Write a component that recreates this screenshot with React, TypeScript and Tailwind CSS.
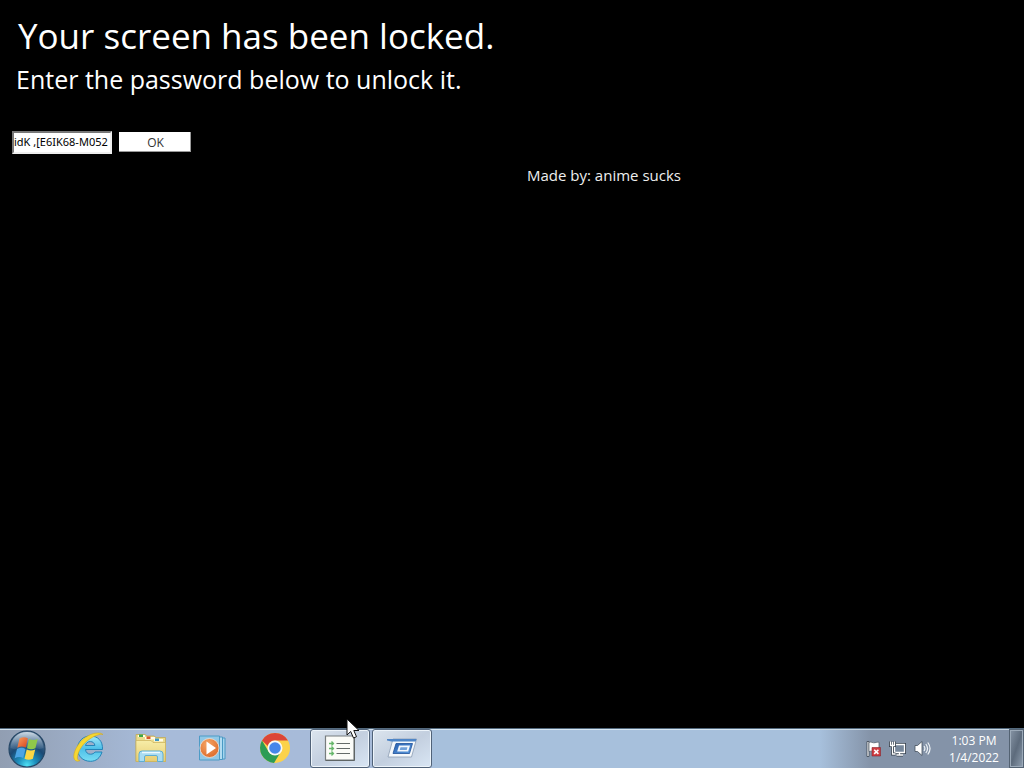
import { useState } from "react";
import type { ReactNode } from "react";

function StartOrb() {
  return (
    <svg viewBox="0 0 38 38" className="h-[38px] w-[38px]" aria-hidden="true">
      <defs>
        <radialGradient id="orb" cx="50%" cy="95%" r="90%">
          <stop offset="0" stopColor="#4fe0f4" />
          <stop offset="0.28" stopColor="#1d8fbd" />
          <stop offset="0.6" stopColor="#1b4a75" />
          <stop offset="1" stopColor="#54718f" />
        </radialGradient>
        <linearGradient id="orbShine" x1="0" y1="0" x2="0" y2="1">
          <stop offset="0" stopColor="#e3edf5" stopOpacity="0.85" />
          <stop offset="1" stopColor="#8fa9c2" stopOpacity="0.15" />
        </linearGradient>
        <linearGradient id="flagRed" x1="0" y1="0" x2="1" y2="1">
          <stop offset="0" stopColor="#f7a060" />
          <stop offset="1" stopColor="#d9431c" />
        </linearGradient>
      </defs>
      <circle cx="19" cy="19" r="18" fill="url(#orb)" stroke="#264766" strokeWidth="1.2" />
      <path d="M2.500 18C3 8 10 2 19 2s16 6 16.500 16C29 21 25 16 19 17S8 21 2.500 18z" fill="url(#orbShine)" />
      <path d="M11.500 8.500c3-1.800 5.800-1.700 8.300-.2L17.800 17.500c-2.700-1.400-5.500-1.300-8.500.2z" fill="url(#flagRed)" />
      <path d="M21 9c2.800 1.400 5.800 1.400 8.700 0l-2.300 9.300c-2.800 1.400-5.600 1.300-8.400 0z" fill="#8fc84a" />
      <path d="M9 19c3-1.500 5.800-1.500 8.500-.1l-2.300 9.200c-2.700-1.500-5.500-1.500-8.500.2z" fill="#4ba4e4" />
      <path d="M18.700 19.500c2.800 1.300 5.600 1.300 8.500 0l-2.300 9.200c-2.900 1.500-5.700 1.400-8.400 0z" fill="#fbd644" />
    </svg>
  );
}

function ExplorerE() {
  return (
    <svg viewBox="0 0 32 32" className="h-8 w-8" aria-hidden="true">
      <defs>
        <linearGradient id="ie" x1="0" y1="0" x2="0" y2="1">
          <stop offset="0" stopColor="#a2e8f8" />
          <stop offset="0.5" stopColor="#4cbfe9" />
          <stop offset="1" stopColor="#7addf4" />
        </linearGradient>
      </defs>
      <path
        d="M29.500 17.500H12.500c.3 3 2.300 4.700 5 4.700 2 0 3.500-.8 4.500-2.200h7c-1.800 6-6 9.300-11.500 9.300C9.700 29.300 4.500 24 4.500 16.800S10 4 17.200 4c7.800 0 12.700 5 12.300 13.500zM12.500 13.500h9.400c-.4-2.500-2.100-3.900-4.600-3.900s-4.300 1.400-4.800 3.900z"
        fill="url(#ie)"
        stroke="#2584b8"
        strokeWidth="1"
      />
      <path
        d="M30 2.500C25-1.500 13 2.500 6.500 11 1 18.200-1 26 2.500 28.500c1.500 1 3 .8 4.500 0-2.600.2-3.200-2.500-2-6.200 1.300-4.900 5.500-11.200 11-14.800C21 4 27 1.500 30 2.500z"
        fill="#f6d730"
        stroke="#d3a91e"
        strokeWidth="0.600"
      />
    </svg>
  );
}

function Folders() {
  return (
    <svg viewBox="0 0 34 32" className="h-8 w-[34px]" aria-hidden="true">
      <defs>
        <linearGradient id="folder" x1="0" y1="0" x2="0" y2="1">
          <stop offset="0" stopColor="#f7eda8" />
          <stop offset="1" stopColor="#e7cd72" />
        </linearGradient>
      </defs>
      <path d="M2 5V2.500h9L13 4h7l2 1.500h9.500v24H2z" fill="#eadb8c" stroke="#bfa54e" strokeWidth="0.700" />
      <path d="M4 3h7v2H4z" fill="#fffde9" />
      <path d="M5 2.500h4v2.500H5z" fill="#3ca648" />
      <path d="M11 5h10v2.500h-10z" fill="#fffbe7" />
      <path d="M12.500 4.500h4v2.500h-4z" fill="#d8562f" />
      <path d="M20 7h9v2.500h-9z" fill="#fffbe7" />
      <path d="M21 6.500h4v2.500h-4z" fill="#3e98c6" />
      <path d="M2 8.500h15l2 2h12.500v19H2z" fill="url(#folder)" stroke="#cbb15b" strokeWidth="0.700" />
      <path
        d="M5 29.500V22q0-3 3-3h18q3 0 3 3v7.500h-5.500V25q0-1.500-1.500-1.500H12q-1.500 0-1.500 1.500v4.500z"
        fill="#a9dcf2"
        stroke="#5faed3"
        strokeWidth="1"
      />
      <path d="M8 20.500h18" stroke="#ecfaff" strokeWidth="1.500" />
    </svg>
  );
}

function MediaPlayer() {
  return (
    <svg viewBox="0 0 32 28" className="h-7 w-8" aria-hidden="true">
      <defs>
        <radialGradient id="play" cx="40%" cy="30%" r="75%">
          <stop offset="0" stopColor="#f5a565" />
          <stop offset="1" stopColor="#dc6a2a" />
        </radialGradient>
      </defs>
      <path d="M10 4h18v21H10z" fill="#a5d5ee" stroke="#4a99c4" />
      <path d="M7 3h18.500v22.500H7z" fill="#b2dcf1" stroke="#4a99c4" />
      <path d="M2.500 2h20v24h-20z" fill="#91c8e6" stroke="#4d9bc6" />
      <circle cx="12.500" cy="14" r="9.500" fill="url(#play)" stroke="#ece5dc" strokeWidth="0.800" />
      <path d="M9.500 7.500v13l9.500-6.500z" fill="#fff" />
    </svg>
  );
}

function Chrome() {
  return (
    <svg viewBox="0 0 32 32" className="h-8 w-8" aria-hidden="true">
      <circle cx="16" cy="16" r="15" fill="#fbd24a" />
      <path d="M3 8.500A15 15 0 0 1 29 8.500H16a7.500 7.500 0 0 0-7.200 5.500z" fill="#dc4538" />
      <path d="M3 8.500a15 15 0 0 0 12 22.400l7-11.400a7.500 7.500 0 0 1-12.500 0z" fill="#2d9c55" />
      <circle cx="16" cy="16" r="7.500" fill="#f7f8f8" />
      <circle cx="16" cy="16" r="5.800" fill="#4586ea" />
    </svg>
  );
}

function TaskList() {
  return (
    <svg viewBox="0 0 32 28" className="h-7 w-8" aria-hidden="true">
      <path d="M1.500 2h28.500v24H1.500z" fill="#fbfcf8" stroke="#777d7e" strokeWidth="1.200" />
      <path d="M1.500 26.500h29V3" fill="none" stroke="#5f6565" />
      <path d="M12.500 9.500H26M12.500 14.500H26M12.500 19.500H26" stroke="#646b69" />
      <path
        d="M5 9.500h4.500M7.500 7.500l2 2-2 2M5 14.500h4.500M7.500 12.500l2 2-2 2M5 19.500h4.500M7.500 17.500l2 2-2 2"
        fill="none"
        stroke="#65b66a"
        strokeWidth="1.300"
      />
    </svg>
  );
}

function RunWindow() {
  return (
    <svg viewBox="0 0 32 24" className="h-6 w-8" aria-hidden="true">
      <defs>
        <linearGradient id="run" x1="0" y1="0" x2="1" y2="1">
          <stop offset="0" stopColor="#285fae" />
          <stop offset="1" stopColor="#5a9ae0" />
        </linearGradient>
      </defs>
      <path d="M7 3h23.500l-5 18H2z" fill="#f5f8fb" stroke="#8c9db2" strokeWidth="0.800" />
      <path d="M1 3h29.500l-.8 2.500H5.500L1 4.500z" fill="#4f86c7" />
      <path d="M10 7.500H26.500l-3 10H7z" fill="url(#run)" stroke="#1e5098" strokeWidth="0.800" />
      <path d="M13 9.500h11l-1.800 6H11.200z" fill="#f2f7fc" />
      <path d="M14.500 11.300h7l-.8 2.700h-7z" fill="#6f9fd8" />
    </svg>
  );
}

function FlagIcon() {
  return (
    <svg viewBox="0 0 18 18" className="h-[18px] w-[18px]" aria-hidden="true">
      <path d="M2 1.500h2v15H2z" fill="#fff" stroke="#39434f" strokeWidth="0.800" />
      <path d="M4 2.500c2-1.200 3.800.8 6 .2 1.500-.4 2.500-.8 4-.5v9c-2-.4-3 .9-5 .4-1.800-.4-3.500-.8-5 0z" fill="#fff" stroke="#4b5663" strokeWidth="0.700" />
      <path d="M7 7.500h8.500V16H7z" fill="#cf3d42" stroke="#8b242c" strokeWidth="0.600" strokeLinejoin="round" />
      <path d="m9.200 9.700 4.200 4.200m0-4.200-4.200 4.200" stroke="#fff" strokeWidth="1.600" />
    </svg>
  );
}

function NetworkIcon() {
  return (
    <svg viewBox="0 0 18 18" className="h-[18px] w-[18px]" aria-hidden="true">
      <path d="M5.500 4.500h10v8h-10zM7.500 15h6.500M10.500 13v2" fill="#748091" stroke="#35404c" strokeWidth="3" />
      <path d="M5.500 4.500h10v8h-10zM7.500 15h6.500M10.500 13v2" fill="#76879b" stroke="#fff" strokeWidth="1.300" />
      <path d="M1.500 1.500v4h4v-4M3.500 5.500v8.500h3" fill="none" stroke="#35404c" strokeWidth="3" />
      <path d="M1.500 1.500v4h4v-4M3.500 2v12h3" fill="none" stroke="#fff" strokeWidth="1.300" />
    </svg>
  );
}

function VolumeIcon() {
  return (
    <svg viewBox="0 0 18 18" className="h-[18px] w-[18px]" aria-hidden="true">
      <path d="M2 5.500h2.500L9 1.500v14l-4.500-4H2z" fill="#fff" stroke="#424e5b" strokeWidth="0.800" />
      <path d="M11 6q1.800 2.500 0 5M12.800 4q3.500 4.500 0 9M14.800 2.500q4.500 6 0 12" fill="none" stroke="#eff4f7" strokeWidth="1.200" />
    </svg>
  );
}

function TaskButton({ label, children }: { label: string; children: ReactNode }) {
  return (
    <button
      type="button"
      aria-label={label}
      className="flex h-[39px] w-[60px] items-center justify-center rounded-[3px] border border-[#506278] bg-linear-to-br from-[#dce5ee] via-[#c3cfdf] to-[#d9e6f4] pb-[2px] shadow-[inset_0_0_0_1px_#edf4fa]"
    >
      {children}
    </button>
  );
}

function Launcher({ label, children }: { label: string; children: ReactNode }) {
  return (
    <button type="button" aria-label={label} className="flex h-[39px] w-[62px] items-center justify-center pb-[2px]">
      {children}
    </button>
  );
}

export default function App() {
  const [password, setPassword] = useState("idK ,[E6IK68-M052");

  return (
    <div className="relative flex min-h-screen flex-col bg-black font-['Open_Sans',sans-serif] text-white">
      <main className="flex-1">
        <header className="px-4 pt-3">
          <h1 className="pl-[2px] text-[35px] leading-[48px]">Your screen has been locked.</h1>
          <p className="text-[25px] leading-[38px]">Enter the password below to unlock it.</p>
        </header>
        <form className="flex items-start gap-[7px] px-3 pt-[33px]" onSubmit={(e) => e.preventDefault()}>
          <input
            type="text"
            aria-label="Password"
            value={password}
            onChange={(e) => setPassword(e.target.value)}
            className="h-[23px] w-[100px] border-2 border-t-[#777] border-r-[#eee] border-b-[#eee] border-l-[#777] bg-white pb-[3px] font-['Noto_Sans',sans-serif] text-[11px] text-black outline-none"
          />
          <button
            type="submit"
            className="mt-px h-5 w-[72px] border-r border-b border-[#999] bg-white pl-[2px] text-[12px] leading-[21px] text-[#333]"
          >
            OK
          </button>
        </form>
        <p className="pt-[9px] pl-[527px] text-[15px] leading-6 text-[#eee]">Made by: anime sucks</p>
      </main>

      <footer className="flex h-10 items-stretch border-t border-[#53697d] bg-[#a7c0dc] shadow-[inset_0_1px_0_#d6e7f3]">
        <nav aria-label="Taskbar" className="flex items-center bg-linear-to-r from-[#919eb2] to-[#a7bbd9] to-35% shadow-[inset_0_1px_0_#d3e2ed]">
          <button type="button" aria-label="Start" className="flex w-[58px] items-center pl-2">
            <StartOrb />
          </button>
          <Launcher label="Internet Explorer">
            <ExplorerE />
          </Launcher>
          <Launcher label="Libraries">
            <Folders />
          </Launcher>
          <Launcher label="Media Player">
            <MediaPlayer />
          </Launcher>
          <Launcher label="Google Chrome">
            <Chrome />
          </Launcher>
          <div className="flex gap-[2px] pl-1">
            <TaskButton label="Task list">
              <TaskList />
            </TaskButton>
            <TaskButton label="Screen lock">
              <RunWindow />
            </TaskButton>
          </div>
        </nav>
        <div className="ml-auto flex w-[204px] items-stretch bg-linear-to-r from-[#a7c0dc] to-[#8493a8] to-25% shadow-[inset_0_1px_0_#c6d5e1]">
          <div className="flex flex-1 items-center justify-end gap-[6px]">
            <FlagIcon />
            <NetworkIcon />
            <VolumeIcon />
          </div>
          <div className="flex w-[78px] flex-col items-center justify-center pt-px pl-2 text-[12px] leading-[17px]">
            <span>1:03 PM</span>
            <span>1/4/2022</span>
          </div>
          <button
            type="button"
            aria-label="Show desktop"
            className="w-[15px] border border-[#536272] bg-linear-to-br from-[#8795a6] via-[#5d6b7c] to-[#909fb0] shadow-[inset_0_0_0_1px_#9caab9]"
          />
        </div>
      </footer>

      <svg viewBox="0 0 14 21" className="pointer-events-none absolute bottom-[29px] left-[346px] h-[21px] w-[14px]" aria-hidden="true">
        <path d="M1 1v16l3.700-3.500L7.500 20l3-1.300-2.700-6.200H13z" fill="#fff" stroke="#111" />
      </svg>
    </div>
  );
}
